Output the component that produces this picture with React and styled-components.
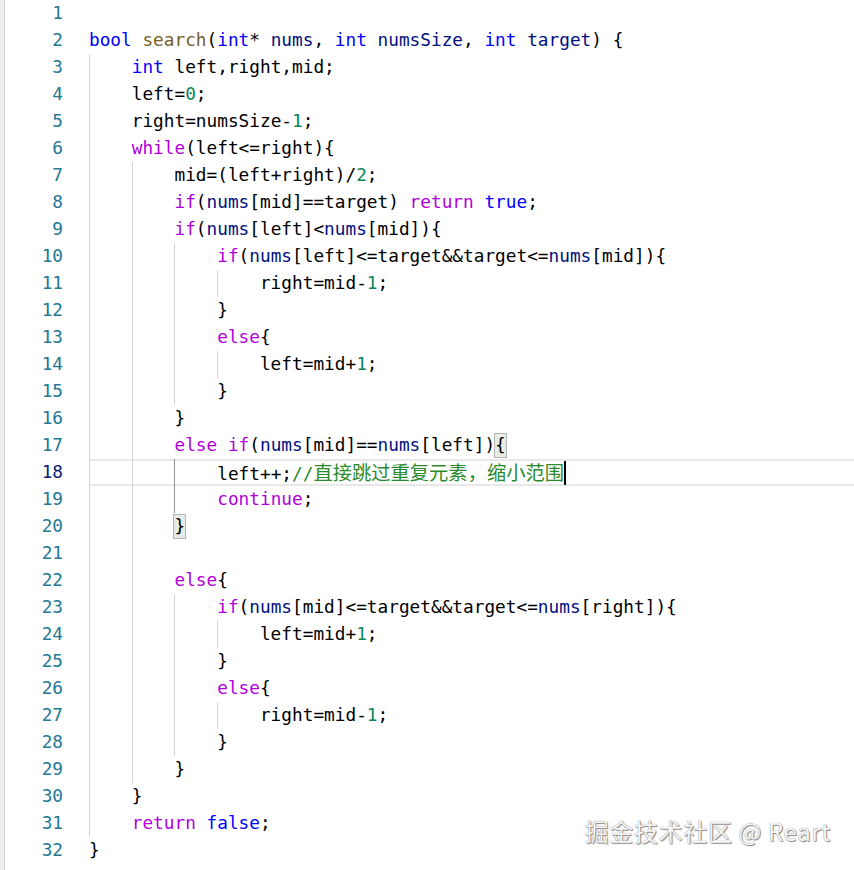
import React from "react";
import styled, { createGlobalStyle } from "styled-components";

const GlobalStyle = createGlobalStyle`
  html, body {
    margin: 0;
    padding: 0;
    background: #ffffff;
  }
`;

const palette = {
  keyword: "#0000ff",
  control: "#af00db",
  func: "#795e26",
  number: "#098658",
  param: "#001080",
  comment: "#2b8a2b",
  plain: "#000000",
};

const Editor = styled.div`
  position: relative;
  display: flex;
  width: 854px;
  height: 870px;
  overflow: hidden;
  background: #ffffff;
  font-family: "DejaVu Sans Mono", "Liberation Mono", monospace;
  font-size: 17.75px;
`;

const Margin = styled.div`
  width: 4px;
  background: #f0f0f0;
  border-right: 1px solid #d4d4d4;
`;

const Lines = styled.div`
  flex: 1;
  display: flex;
  flex-direction: column;
`;

const Line = styled.div`
  display: flex;
  height: 27px;
  line-height: 27px;
`;

const LineNo = styled.div`
  width: 58px;
  text-align: right;
  color: ${(p) => (p.$current ? "#0b216f" : "#237893")};
`;

const Code = styled.div`
  flex: 1;
  margin-left: 26px;
  white-space: pre;
  box-shadow: ${(p) =>
    p.$current ? "inset 0 2px 0 #e8e8e8, inset 0 -2px 0 #e8e8e8" : "none"};
`;

const Guide = styled.span`
  display: inline-block;
  box-sizing: border-box;
  width: 4ch;
  height: 27px;
  vertical-align: top;
  border-left: 1px solid ${(p) => (p.$active ? "#939393" : "#d6d6d6")};
`;

const Tok = styled.span`
  color: ${(p) => palette[p.$kind]};
`;

const Cjk = styled.span`
  font-family: "Noto Sans CJK SC", sans-serif;
  font-size: 19.3px;
`;

const Match = styled.span`
  display: inline-block;
  box-sizing: border-box;
  height: 25px;
  line-height: 23px;
  margin-top: 1px;
  vertical-align: top;
  border: 1px solid #b4b4b4;
  background: #e6ece6;
  margin-left: -1px;
`;

const Caret = styled.span`
  display: inline-block;
  width: 2px;
  height: 24px;
  margin-top: 2px;
  vertical-align: top;
  background: #000000;
`;

const Watermark = styled.div`
  position: absolute;
  right: 23px;
  bottom: 22px;
  font-family: "Noto Sans CJK SC", "Noto Sans", sans-serif;
  font-size: 24px;
  color: #f6f6f6;
  text-shadow: 0 0 1px #6a6a6a, 1px 1px 1px #8a8a8a;
  letter-spacing: 0.65px;
`;

const KEYWORDS = ["bool", "int", "true", "false"];
const CONTROL = ["while", "if", "else", "return", "continue"];

const lines = [
  { indent: 0, text: "" },
  { indent: 0, text: "bool search(int* nums, int numsSize, int target) {", params: true },
  { indent: 1, text: "int left,right,mid;" },
  { indent: 1, text: "left=0;" },
  { indent: 1, text: "right=numsSize-1;" },
  { indent: 1, text: "while(left<=right){" },
  { indent: 2, text: "mid=(left+right)/2;" },
  { indent: 2, text: "if(nums[mid]==target) return true;" },
  { indent: 2, text: "if(nums[left]<nums[mid]){" },
  { indent: 3, text: "if(nums[left]<=target&&target<=nums[mid]){" },
  { indent: 4, text: "right=mid-1;" },
  { indent: 3, text: "}" },
  { indent: 3, text: "else{" },
  { indent: 4, text: "left=mid+1;" },
  { indent: 3, text: "}" },
  { indent: 2, text: "}" },
  { indent: 2, text: "else if(nums[mid]==nums[left])", match: "{" },
  { indent: 3, text: "left++;", comment: "//", cjk: "直接跳过重复元素，缩小范围", current: true, activeGuide: 2, caret: true },
  { indent: 3, text: "continue;", activeGuide: 2 },
  { indent: 2, text: "", match: "}" },
  { indent: 2, text: "" },
  { indent: 2, text: "else{" },
  { indent: 3, text: "if(nums[mid]<=target&&target<=nums[right]){" },
  { indent: 4, text: "left=mid+1;" },
  { indent: 3, text: "}" },
  { indent: 3, text: "else{" },
  { indent: 4, text: "right=mid-1;" },
  { indent: 3, text: "}" },
  { indent: 2, text: "}" },
  { indent: 1, text: "}" },
  { indent: 1, text: "return false;" },
  { indent: 0, text: "}" },
];

function tokenize(text, params) {
  const out = [];
  const re = /([A-Za-z_]\w*)|(\d+)|([^A-Za-z_\d]+)/g;
  let m;
  while ((m = re.exec(text))) {
    if (m[1]) {
      const w = m[1];
      let kind = "plain";
      if (KEYWORDS.includes(w)) kind = "keyword";
      else if (CONTROL.includes(w)) kind = "control";
      else if (w === "search") kind = "func";
      else if (w === "nums" || (params && (w === "numsSize" || w === "target"))) kind = "param";
      out.push({ kind, text: w });
    } else if (m[2]) {
      out.push({ kind: "number", text: m[2] });
    } else {
      out.push({ kind: "plain", text: m[3] });
    }
  }
  return out;
}

const CodeLine = ({ line }) => (
  <>
    {Array.from({ length: line.indent }).map((_, i) => (
      <Guide key={i} $active={line.activeGuide === i} />
    ))}
    {tokenize(line.text, line.params).map((t, i) => (
      <Tok key={i} $kind={t.kind}>
        {t.text}
      </Tok>
    ))}
    {line.comment && (
      <Tok $kind="comment">
        {line.comment}
        <Cjk>{line.cjk}</Cjk>
      </Tok>
    )}
    {line.caret && <Caret />}
    {line.match && <Match>{line.match}</Match>}
  </>
);

export default function App() {
  return (
    <>
      <GlobalStyle />
      <Editor>
        <Margin />
        <Lines>
          {lines.map((line, i) => (
            <Line key={i}>
              <LineNo $current={line.current}>{i + 1}</LineNo>
              <Code $current={line.current}>
                <CodeLine line={line} />
              </Code>
            </Line>
          ))}
        </Lines>
        <Watermark>掘金技术社区 @ Reart</Watermark>
      </Editor>
    </>
  );
}
